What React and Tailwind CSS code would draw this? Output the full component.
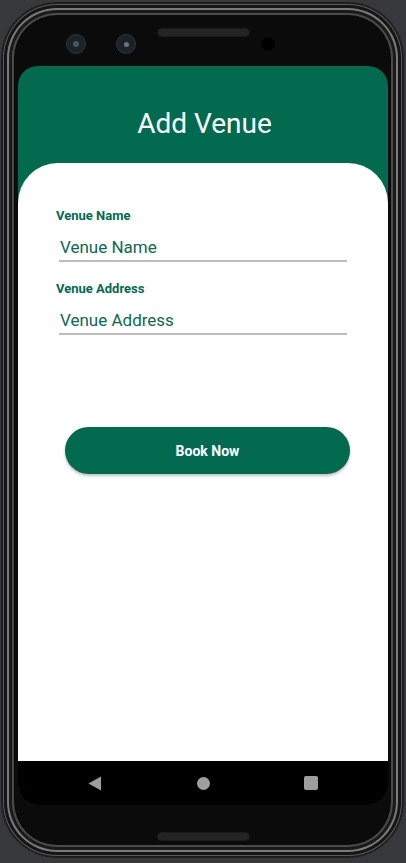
import React from "react";

const GREEN = "bg-[#016a4f]";

export default function App() {
  return (
    <div className="w-[406px] h-[863px] overflow-hidden bg-[#36383b] pl-[1px] pt-[2px]" style={{ fontFamily: "Roboto, 'Noto Sans', sans-serif" }}>
      <div className="relative w-[403px] h-[856px] rounded-[56px] bg-[#0b0b0b] pl-[17px] pr-[16px] pt-[64px] pb-[53px] shadow-[inset_0_0_0_2px_#1e1e1e,inset_0_0_0_3px_#5a5a5a,inset_0_0_0_6px_#151515,inset_0_0_0_8px_#7a7a7a,inset_0_0_0_11px_#1a1a1a,inset_0_0_0_13px_#4a4a4a,inset_0_0_0_15px_#0b0b0b]">
        {/* top decorations */}
        <div className="absolute left-[65px] top-[32px] w-[20px] h-[20px] rounded-full bg-[#1b2228] border border-[#2c3640] flex items-center justify-center">
          <div className="w-[6px] h-[6px] rounded-full bg-[#4a5560]" />
        </div>
        <div className="absolute left-[115px] top-[32px] w-[20px] h-[20px] rounded-full bg-[#1b2228] border border-[#2c3640] flex items-center justify-center">
          <div className="w-[5px] h-[5px] rounded-full bg-[#6a7580]" />
        </div>
        <div className="absolute left-[156px] top-[26px] w-[93px] h-[9px] rounded-full bg-[#242424] border border-[#1a1a1a]" />
        <div className="absolute left-[260px] top-[35px] w-[14px] h-[14px] rounded-full bg-black" />
        <div className="absolute left-[156px] top-[830px] w-[93px] h-[9px] rounded-full bg-[#242424] border border-[#1a1a1a]" />

        {/* screen */}
        <div className={`w-[370px] h-[739px] rounded-[20px] overflow-hidden flex flex-col ${GREEN}`}>
          <div className="h-[97px] shrink-0 pt-[42px] pl-[3px] text-center text-white text-[28px] leading-[32px]">
            Add Venue
          </div>
          <div className="flex-1 bg-white rounded-t-[40px] pt-[44px]">
            <Field label="Venue Name" placeholder="Venue Name" />
            <div className="h-[18px]" />
            <Field label="Venue Address" placeholder="Venue Address" />
            <div className="pl-[47px] pt-[92px]">
              <button className={`w-[285px] h-[47px] pt-[1px] rounded-full ${GREEN} text-white font-bold text-[14px] shadow-[0_2px_3px_rgba(0,0,0,0.25)]`}>
                Book Now
              </button>
            </div>
          </div>
          <div className="h-[44px] shrink-0 bg-black flex items-center pl-[70px]">
            <svg width="14" height="15" viewBox="0 0 14 15" className="shrink-0">
              <path d="M13 0.5 L13 14.5 L0.5 7.5 Z" fill="#9e9e9e" />
            </svg>
            <div className="ml-[95px] w-[13px] h-[13px] rounded-full bg-[#9e9e9e] shrink-0" />
            <div className="ml-[94px] w-[14px] h-[14px] rounded-[2px] bg-[#9e9e9e] shrink-0" />
          </div>
        </div>
      </div>
    </div>
  );
}

function Field({ label, placeholder }) {
  return (
    <div>
      <div className="pl-[38px] text-[13px] leading-[18px] font-bold text-[#016a4f]">{label}</div>
      <div className="ml-[41px] w-[288px] mt-[10px] pb-[1px] border-b-2 border-[#bdbdbd]">
        <div className="pl-[1px] text-[17px] leading-[24px] text-[#0b6a50]">{placeholder}</div>
      </div>
    </div>
  );
}
